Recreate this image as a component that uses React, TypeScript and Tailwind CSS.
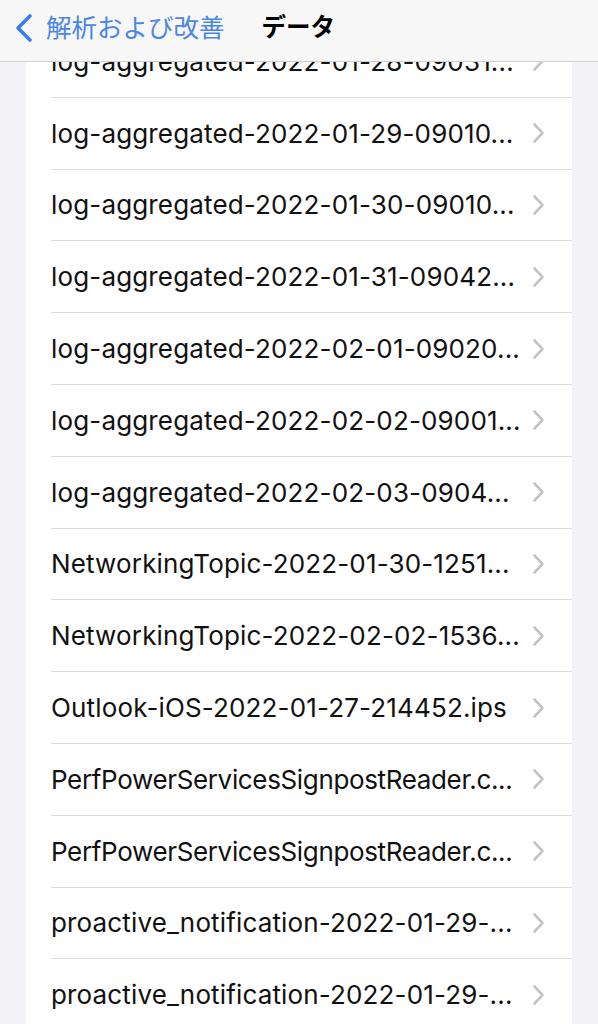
import React from 'react';

type Row = { name: string; tight?: boolean };

const files: Row[] = [
  { name: 'log-aggregated-2022-01-28-09031...' },
  { name: 'log-aggregated-2022-01-29-09010...' },
  { name: 'log-aggregated-2022-01-30-09010...' },
  { name: 'log-aggregated-2022-01-31-09042...' },
  { name: 'log-aggregated-2022-02-01-09020...' },
  { name: 'log-aggregated-2022-02-02-09001...' },
  { name: 'log-aggregated-2022-02-03-0904...' },
  { name: 'NetworkingTopic-2022-01-30-1251...' },
  { name: 'NetworkingTopic-2022-02-02-1536...' },
  { name: 'Outlook-iOS-2022-01-27-214452.ips' },
  { name: 'PerfPowerServicesSignpostReader.c...', tight: true },
  { name: 'PerfPowerServicesSignpostReader.c...', tight: true },
  { name: 'proactive_notification-2022-01-29-...' },
  { name: 'proactive_notification-2022-01-29-...' },
];

const Chevron: React.FC = () => (
  <svg width="13" height="22" viewBox="0 0 13 22" fill="none" className="flex-shrink-0">
    <path d="M2.5 2.5 L10.5 11 L2.5 19.5" stroke="#c4c4c7" strokeWidth="2.6" strokeLinecap="round" strokeLinejoin="round" />
  </svg>
);

const App: React.FC = () => {
  return (
    <div className="relative w-[598px] h-[1024px] overflow-hidden bg-[#f2f2f7] font-['Inter','Noto_Sans_CJK_JP',sans-serif]">
      {/* nav bar sits over the scrolled list */}
      <div className="absolute top-0 left-0 right-0 z-10 h-[62px] bg-[#f7f7f8] border-b border-[#cfcfd2] flex items-center pb-[6px]">
        <div className="flex items-center pl-[14px]">
          <svg width="20" height="30" viewBox="0 0 20 30" fill="none">
            <path d="M16 3 L4 15 L16 27" stroke="#3a7bf0" strokeWidth="3.6" strokeLinecap="round" strokeLinejoin="round" />
          </svg>
          <span className="ml-[12px] text-[25.5px] text-[#4a86e4] leading-none">解析および改善</span>
        </div>
        <span className="ml-[37px] text-[24.5px] font-bold text-black leading-none">データ</span>
      </div>

      <div className="pt-[26px] px-[26px]">
        <div className="bg-white">
          {files.map((row, i) => (
            <div key={i} className="h-[71.8px] pl-[25px] flex">
              <div className="flex-1 min-w-0 flex items-center border-b border-[#dcdcdf] pr-[27px]">
                <span
                  className={
                    'flex-1 min-w-0 whitespace-nowrap overflow-hidden text-[26px] text-[#111] ' +
                    (row.tight ? 'tracking-[-0.35px]' : 'tracking-[0.15px]')
                  }
                >
                  {row.name}
                </span>
                <Chevron />
              </div>
            </div>
          ))}
        </div>
      </div>
    </div>
  );
};

export default App;
